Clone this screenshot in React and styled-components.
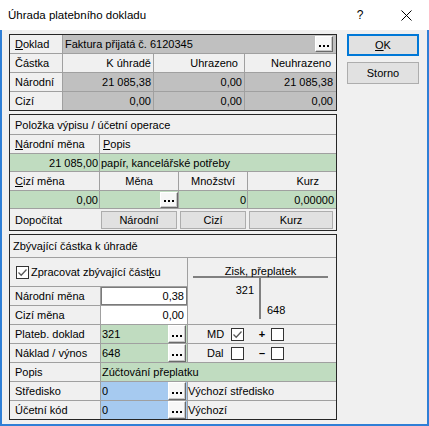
import React from 'react';
import styled, { createGlobalStyle } from 'styled-components';

const Global = createGlobalStyle`
  html, body { margin: 0; padding: 0; background: #fff; }
  body {
    font-family: "Liberation Sans", Arial, sans-serif;
    font-size: 11px;
    color: #000;
  }
  * { box-sizing: border-box; }
`;

const BG = {
  face: '#f0f0f0',
  gray: '#c0c0c0',
  green: '#c0dcc0',
  blue: '#a6caf0',
  white: '#ffffff',
};

const Window = styled.div`
  width: 429px;
  height: 426px;
  display: flex;
  flex-direction: column;
  background: #f0f0f0;
  overflow: hidden;
`;

const TitleBar = styled.div`
  height: 30px;
  flex: none;
  background: #fff;
  display: flex;
  align-items: center;
  padding-left: 8px;
  font-size: 11.5px;
`;

const TitleText = styled.div`
  flex: 1;
  padding-bottom: 1px;
`;

const TitleButton = styled.div`
  width: 46px;
  height: 30px;
  display: flex;
  align-items: center;
  justify-content: center;
  font-size: 12px;
`;

const Body = styled.div`
  flex: 1;
  display: flex;
  align-items: flex-start;
  gap: 10px;
  padding: 4px 0 0 7px;
  border: 2px solid #2f7fd6;
  border-top: none;
`;

const LeftCol = styled.div`
  width: 328px;
  display: flex;
  flex-direction: column;
  gap: 3px;
`;

const ButtonCol = styled.div`
  width: 72px;
  display: flex;
  flex-direction: column;
  gap: 6px;
`;

const DlgButton = styled.button`
  width: 72px;
  height: 22px;
  padding: 0;
  background: #e1e1e1;
  border: ${p => (p.$default ? '2px solid #0078d7' : '1px solid #adadad')};
  font-family: "Liberation Sans", Arial, sans-serif;
  font-size: 11px;
  color: #000;
`;

const Section = styled.div`
  border: 1px solid #262626;
  display: grid;
  grid-template-columns: ${p => p.$cols};
  grid-template-rows: ${p => p.$rows};
  gap: 1px;
  background: #a0a0a0;
`;

const Cell = styled.div`
  background: ${p => BG[p.$bg || 'face']};
  grid-column: ${p => p.$col || 'auto'};
  display: flex;
  align-items: center;
  justify-content: ${p =>
    p.$align === 'right' ? 'flex-end' : p.$align === 'center' ? 'center' : 'flex-start'};
  padding: 0 ${p => p.$pr ?? 2}px 0 ${p => p.$pl ?? 2}px;
  white-space: nowrap;
  overflow: hidden;
  border: ${p => (p.$boxed ? '1px solid #7a7a7a' : 'none')};
`;

const FieldText = styled.span`
  flex: 1;
  overflow: hidden;
`;

const U = styled.span`
  text-decoration: underline;
`;

const DotsButton = styled.button`
  flex: none;
  width: 18px;
  height: ${p => p.$h || 16}px;
  margin-right: ${p => p.$mr ?? 0}px;
  padding: 0;
  background: #f7f7f7;
  border: 1px solid;
  border-color: #ffffff #6a6a6a #6a6a6a #ffffff;
  box-shadow: inset -1px -1px 0 #c8c8c8;
  display: flex;
  align-items: center;
  justify-content: center;
  gap: 2px;
  padding-top: 3px;
`;

const Dot = styled.span`
  width: 2px;
  height: 2px;
  background: #000;
`;

const Dots = ({ h, mr }) => (
  <DotsButton $h={h} $mr={mr}>
    <Dot />
    <Dot />
    <Dot />
  </DotsButton>
);

const CalcRow = styled.div`
  grid-column: 1 / -1;
  background: #f0f0f0;
  display: flex;
  align-items: center;
`;

const CalcLabel = styled.span`
  width: 91px;
  padding-left: 5px;
`;

const FlatButton = styled.button`
  width: ${p => p.$w}px;
  height: 18px;
  margin-left: ${p => p.$ml ?? 0}px;
  padding: 0;
  background: #e1e1e1;
  border: 1px solid #adadad;
  font-family: "Liberation Sans", Arial, sans-serif;
  font-size: 11px;
  color: #000;
`;

const CheckBox = styled.span`
  flex: none;
  width: 13px;
  height: 13px;
  border: 1px solid #333;
  background: #fff;
  display: inline-flex;
  align-items: center;
  justify-content: center;
  margin-left: ${p => p.$ml ?? 0}px;
`;

const Check = ({ checked, ml }) => (
  <CheckBox $ml={ml}>
    {checked && (
      <svg width="11" height="11" viewBox="0 0 11 11">
        <path d="M1.5 5.5 L4.2 8.2 L9.5 2.5" fill="none" stroke="#5a5a5a" strokeWidth="1.3" />
      </svg>
    )}
  </CheckBox>
);

const CheckCell = styled.div`
  grid-column: 1 / 3;
  background: #f0f0f0;
  display: flex;
  align-items: center;
  padding-left: 6px;
`;

const CheckLabel = styled.span`
  margin-left: 2px;
`;

const TAccount = styled.div`
  grid-column: 3;
  grid-row: 2 / span 3;
  background: #f0f0f0;
  padding: 7px 8px 0 5px;
  display: flex;
  flex-direction: column;
`;

const TTitle = styled.div`
  height: 13px;
  line-height: 13px;
  text-align: center;
  border-bottom: 2px solid #808080;
`;

const TBody = styled.div`
  height: 41px;
  display: grid;
  grid-template-columns: 66px 1fr;
`;

const TSide = styled.div`
  padding-top: ${p => p.$pt}px;
  text-align: ${p => (p.$right ? 'right' : 'left')};
  padding-right: ${p => (p.$right ? 5 : 0)}px;
  padding-left: ${p => (p.$right ? 0 : 6)}px;
  border-left: ${p => (p.$right ? 'none' : '2px solid #808080')};
`;

const SideCell = styled.div`
  background: #f0f0f0;
  display: flex;
  align-items: center;
  padding-left: 19px;
`;

const MiniLabel = styled.span`
  width: 24px;
`;

const Sign = styled.span`
  width: 12px;
  margin-left: 12px;
  text-align: center;
  font-weight: bold;
`;

export default function App() {
  return (
    <>
      <Global />
      <Window>
        <TitleBar>
          <TitleText>Úhrada platebního dokladu</TitleText>
          <TitleButton>?</TitleButton>
          <TitleButton>
            <svg width="11" height="11" viewBox="0 0 11 11">
              <path d="M0.5 0.5 L10.5 10.5 M10.5 0.5 L0.5 10.5" stroke="#000" strokeWidth="1" fill="none" />
            </svg>
          </TitleButton>
        </TitleBar>
        <Body>
          <LeftCol>
            <Section $cols="52px 90px 90px 1fr" $rows="repeat(4, 18px)">
              <Cell $pl={5}><U>D</U>oklad</Cell>
              <Cell $col="2 / -1" $bg="gray" $pl={2} $pr={0}>
                <FieldText>Faktura přijatá č. 6120345</FieldText>
                <Dots h={16} mr={3} />
              </Cell>
              <Cell $pl={5}>Částka</Cell>
              <Cell $align="right" $pr={2}>K úhradě</Cell>
              <Cell $align="right" $pr={6}>Uhrazeno</Cell>
              <Cell $align="right" $pr={5}>Neuhrazeno</Cell>
              <Cell $pl={5}>Národní</Cell>
              <Cell $bg="gray" $align="right">21 085,38</Cell>
              <Cell $bg="gray" $align="right">0,00</Cell>
              <Cell $bg="gray" $align="right" $pr={3}>21 085,38</Cell>
              <Cell $pl={5}>Cizí</Cell>
              <Cell $bg="gray" $align="right">0,00</Cell>
              <Cell $bg="gray" $align="right">0,00</Cell>
              <Cell $bg="gray" $align="right" $pr={3}>0,00</Cell>
            </Section>

            <Section $cols="89px 78px 68px 1fr" $rows="19px 18px 17px 18px 17px 21px">
              <Cell $col="1 / -1" $pl={5}>Položka výpisu / účetní operace</Cell>
              <Cell $pl={5}><U>N</U>árodní měna</Cell>
              <Cell $col="2 / -1" $pl={3}><U>P</U>opis</Cell>
              <Cell $bg="green" $align="right" $pr={1}>21 085,00</Cell>
              <Cell $col="2 / -1" $bg="green" $pl={1}>papír, kancelářské potřeby</Cell>
              <Cell $pl={5}><U>C</U>izí měna</Cell>
              <Cell $align="center">Měna</Cell>
              <Cell $align="center">Množství</Cell>
              <Cell $align="right" $pr={17}>Kurz</Cell>
              <Cell $bg="green" $align="right" $pr={1}>0,00</Cell>
              <Cell $bg="green" $pl={0} $pr={0}>
                <FieldText />
                <Dots h={16} mr={0} />
              </Cell>
              <Cell $bg="green" $align="right" $pr={1}>0</Cell>
              <Cell $bg="green" $align="right" $pr={2}>0,00000</Cell>
              <CalcRow>
                <CalcLabel>Dopočítat</CalcLabel>
                <FlatButton $w={76}>Národní</FlatButton>
                <FlatButton $w={66} $ml={3}>Cizí</FlatButton>
                <FlatButton $w={84} $ml={3}>Kurz</FlatButton>
              </CalcRow>
            </Section>

            <Section $cols="90px 86px 1fr" $rows="22px 28px repeat(7, 18px)">
              <Cell $col="1 / -1" $pl={3}>Zbývající částka k úhradě</Cell>
              <CheckCell>
                <Check checked />
                <CheckLabel>Zpracovat zbývající část<U>k</U>u</CheckLabel>
              </CheckCell>
              <TAccount>
                <TTitle>Zisk, přeplatek</TTitle>
                <TBody>
                  <TSide $right $pt={6}>321</TSide>
                  <TSide $pt={26}>648</TSide>
                </TBody>
              </TAccount>
              <Cell $pl={5}>Národní měna</Cell>
              <Cell $bg="white" $align="right" $pr={2} $boxed>0,38</Cell>
              <Cell $pl={5}>Cizí měna</Cell>
              <Cell $bg="white" $align="right" $pr={3}>0,00</Cell>

              <Cell $pl={5}>Plateb. doklad</Cell>
              <Cell $bg="green" $pl={1} $pr={0}>
                <FieldText>321</FieldText>
                <Dots h={18} mr={1} />
              </Cell>
              <SideCell>
                <MiniLabel>MD</MiniLabel>
                <Check checked />
                <Sign>+</Sign>
                <Check ml={3} />
              </SideCell>

              <Cell $pl={5}>Náklad / výnos</Cell>
              <Cell $bg="green" $pl={1} $pr={0}>
                <FieldText>648</FieldText>
                <Dots h={18} mr={1} />
              </Cell>
              <SideCell>
                <MiniLabel>Dal</MiniLabel>
                <Check />
                <Sign>–</Sign>
                <Check ml={3} />
              </SideCell>

              <Cell $pl={5}>Popis</Cell>
              <Cell $col="2 / -1" $bg="green" $pl={1}>Zúčtování přeplatku</Cell>

              <Cell $pl={5}>Středisko</Cell>
              <Cell $bg="blue" $pl={1} $pr={0}>
                <FieldText>0</FieldText>
                <Dots h={18} mr={1} />
              </Cell>
              <Cell $pl={0}>Výchozí středisko</Cell>

              <Cell $pl={5}>Účetní kód</Cell>
              <Cell $bg="blue" $pl={1} $pr={0}>
                <FieldText>0</FieldText>
                <Dots h={18} mr={1} />
              </Cell>
              <Cell $pl={0}>Výchozí</Cell>
            </Section>
          </LeftCol>
          <ButtonCol>
            <DlgButton $default><U>O</U>K</DlgButton>
            <DlgButton>Storno</DlgButton>
          </ButtonCol>
        </Body>
      </Window>
    </>
  );
}
